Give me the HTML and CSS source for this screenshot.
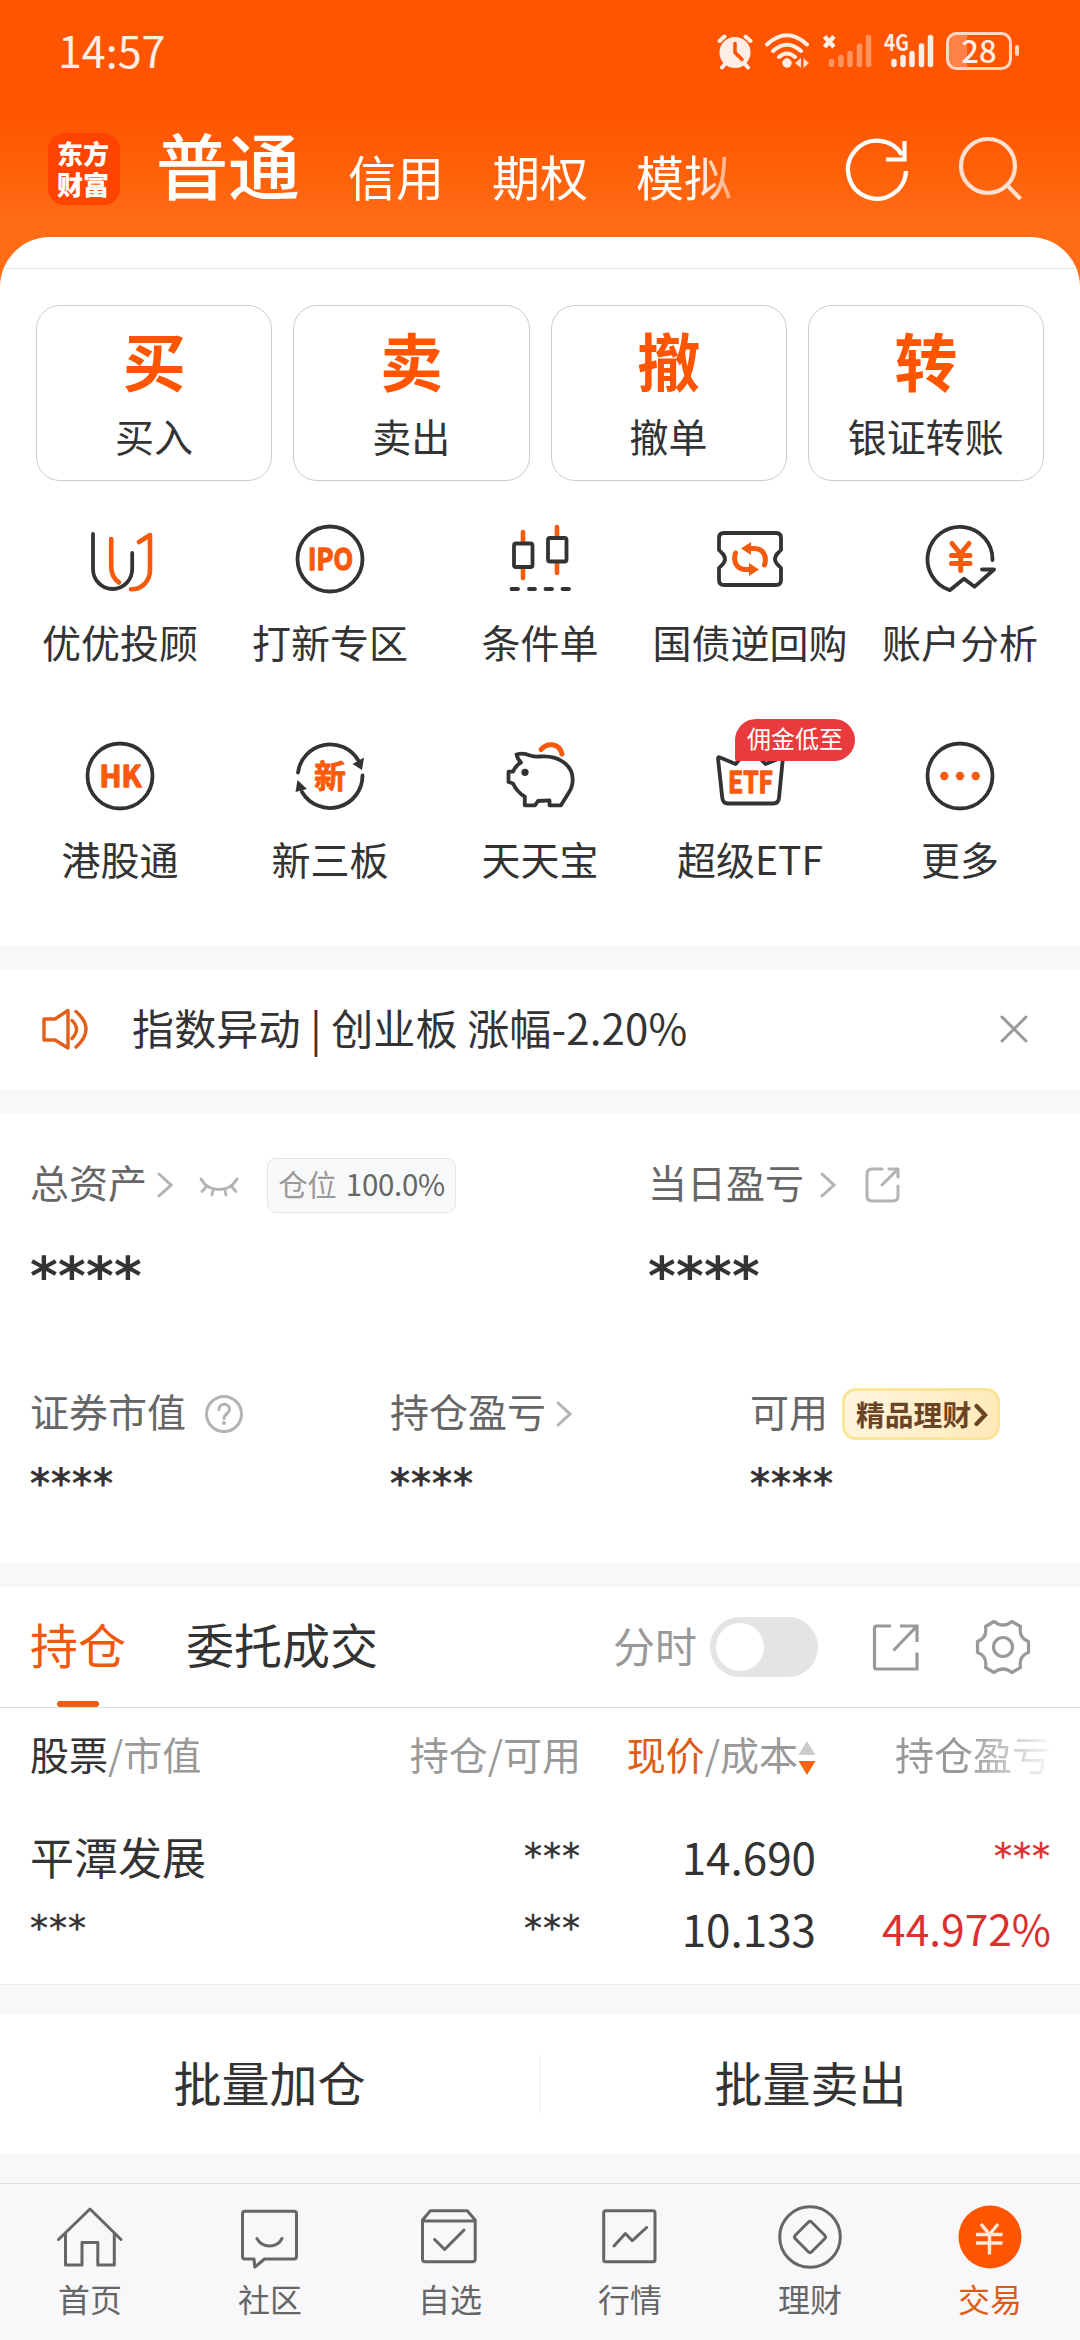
FILE: index.html
```html
<!DOCTYPE html>
<html lang="zh-CN">
<head>
<meta charset="UTF-8">
<meta name="viewport" content="width=1080">
<title>交易</title>
<link rel="stylesheet" href="styles.css">
</head>
<body>
<div class="page">
  <header class="status">
    <span class="clock">14:57</span>
    <div class="status-icons">
      <svg width="36" height="38" viewBox="0 0 36 38"><g fill="none" stroke="#ffeee5" stroke-width="4" stroke-linecap="round"><path d="M2.500 9 7.500 4.500M33.500 9 28.500 4.500M8 32 5 35.500M28 32 31 35.500"/></g><circle cx="18" cy="20.500" r="15.500" fill="#ffeee5"/><path d="M18 11.500V20.500L25 27.500" fill="none" stroke="#ff5500" stroke-width="3.600" stroke-linecap="round"/></svg>
      <svg width="45" height="38" viewBox="0 0 45 38"><g fill="none" stroke="#ffeee5" stroke-width="4" stroke-linecap="round"><path d="M2 12.500Q22 -6 42 12.500M8 19Q22 6.500 36 19M14 25Q22 18 30 25"/></g><circle cx="22" cy="31" r="4.700" fill="#ffeee5"/><path d="M36 26V36L30 31zM38.500 26V36L44 31z" fill="#ffeee5" opacity=".9"/></svg>
      <svg width="50" height="38" viewBox="0 0 50 38"><path d="M2.500 4.500 12 15M12 4.500 2.500 15" stroke="#ffeee5" stroke-width="4.500"/><g stroke="#ff9460" stroke-width="5.500" stroke-linecap="round"><path d="M9.500 29.500V32.500M19 25.500V32.500M28 21.500V32.500M37.500 14V32.500M46.500 5.500V32.500"/></g></svg>
      <svg class="open" width="50" height="38" viewBox="0 0 50 38"><text x="0" y="18.500" class="net" textLength="25" lengthAdjust="spacingAndGlyphs">4G</text><g stroke="#ffeee5" stroke-width="5.500" stroke-linecap="round"><path d="M10 29.500V32.500M19 25.500V32.500M28 21.500V32.500M37.500 14V32.500M46.500 5.500V32.500"/></g></svg>
      <svg class="open" width="73" height="38" viewBox="0 0 73 38"><path d="M3 11Q3 3 11 3H21V35H11Q3 35 3 27z" fill="#ff8148"/><rect x="1.500" y="1.500" width="63" height="35" rx="9" fill="none" stroke="#ffd9c6" stroke-width="3"/><rect x="69" y="13" width="4" height="11" rx="2" fill="#ffd9c6"/><text x="33" y="30.500" class="level" text-anchor="middle">28</text></svg>
    </div>
  </header>

  <nav class="topbar">
    <div class="logo"><span>东方</span><span>财富</span></div>
    <div class="modes"><span class="mode-on">普通</span><span>信用</span><span>期权</span><span>模拟</span></div>
    <div class="tools">
      <svg width="72" height="72" viewBox="0 0 72 72" fill="none" stroke="#fff" stroke-width="4.200"><path d="M65 37A29 29 0 1 1 61 21"/><path d="M63.500 7V25.500H45"/></svg>
      <svg width="72" height="72" viewBox="0 0 72 72" fill="none" stroke="#ffdfcd" stroke-width="4.200"><circle cx="33" cy="32" r="27"/><path d="M52 51 65.500 65"/></svg>
    </div>
  </nav>

  <main>
    <section class="sheet">
      <div class="sheet-head"></div>
      <div class="cards">
        <div class="card"><b>买</b><span>买入</span></div>
        <div class="card"><b>卖</b><span>卖出</span></div>
        <div class="card"><b>撤</b><span>撤单</span></div>
        <div class="card"><b>转</b><span>银证转账</span></div>
      </div>
      <div class="grid">
        <div class="cell"><svg class="ic" viewBox="0 0 72 72"><path d="M9 11V46A19.600 20 0 0 0 48.200 46V30"/><path class="o" d="M27.200 16V43C27.200 51 30 56 35 59.500M47 66.300C58 66.300 66 58 66 47V12L55 19"/></svg><span>优优投顾</span></div>
        <div class="cell"><svg class="ic" viewBox="0 0 72 72"><circle cx="36" cy="36" r="32.500"/><text x="14" y="46.800" textLength="45" lengthAdjust="spacingAndGlyphs">IPO</text></svg><span>打新专区</span></div>
        <div class="cell"><svg class="ic" viewBox="0 0 72 72"><path class="o" d="M19 9V19M19 45V55M53 4V14M53 40V50"/><rect x="10" y="20.500" width="18.500" height="23.500" rx="2"/><rect x="44" y="15" width="18.500" height="23.500" rx="2"/><path d="M7.500 66H14M25 66H31M41.500 66H48M58.500 66H65"/></svg><span>条件单</span></div>
        <div class="cell"><svg class="ic" viewBox="0 0 72 72"><path d="M10 10H62Q67 10 67 15V27L65 29Q57 36 65 43L67 45V57Q67 62 62 62H10Q5 62 5 57V45L7 43Q15 36 7 29L5 27V15Q5 10 10 10z"/><path class="o w5" d="M35 25.500H40C50 25.500 53 34 50.500 42M21.500 30C19 38 22 46.500 32 46.500H37"/><path class="of" d="M27 25.500 37 19V32zM45 46.500 35 40V53z"/></svg><span>国债逆回购</span></div>
        <div class="cell"><svg class="ic" viewBox="0 0 72 72"><path d="M68.500 37A32.500 32.500 0 1 0 25.800 67.200L40 55.700 50.600 63.700 70 46.500H58"/><path class="o w5" d="M28 20.500 36.500 31 45 20.500M27.500 32.500H46M27.500 40.500H46M36.700 31V47.500"/></svg><span>账户分析</span></div>
        <div class="cell"><svg class="ic" viewBox="0 0 72 72"><circle cx="36" cy="36" r="32.500"/><text x="15.500" y="46.800" textLength="42" lengthAdjust="spacingAndGlyphs">HK</text></svg><span>港股通</span></div>
        <div class="cell"><svg class="ic" viewBox="0 0 72 72"><path d="M4 32.500A32.500 32.500 0 0 1 64 20M68.500 35.500A32.500 32.500 0 0 1 8 52"/><path class="df" d="M58.500 24 70 17.500 68 30zM1.500 52 3.500 40 13 49z"/><text class="xin" x="36" y="47.500" text-anchor="middle">新</text></svg><span>新三板</span></div>
        <div class="cell"><svg class="ic" viewBox="0 0 72 72"><path d="M12.500 14.500Q19 12.500 26 15.500Q31 17 36 16.500C56 15 69 26 68.700 40Q68.500 47 65 52.300L57 65.300H45.500V60.300L34 61 31 65.300H20.800V56.700Q13 52 9 43.500L4.500 42V31.700H9Q12 25 17 22.500Q14 20 12.500 14.500z"/><circle class="df" cx="21" cy="32.300" r="3.600"/><path class="o w5" d="M37 9.500C43 2.500 55 2.500 58 14"/></svg><span>天天宝</span></div>
        <div class="cell"><svg class="ic" viewBox="0 0 72 72"><path d="M4 18.500Q4 16.500 6 17.500L21.600 24 36 8 51.500 24 69 17 65 58Q64.500 63.500 59 63.500H14Q9 63.500 8.300 58z"/><text x="14" y="52.800" textLength="45" lengthAdjust="spacingAndGlyphs">ETF</text></svg><span>超级ETF</span><em class="badge">佣金低至</em></div>
        <div class="cell"><svg class="ic" viewBox="0 0 72 72"><circle cx="36" cy="36" r="32.500"/><g class="of"><circle cx="20.300" cy="36" r="4.200"/><circle cx="36" cy="36" r="4.200"/><circle cx="51.700" cy="36" r="4.200"/></g></svg><span>更多</span></div>
      </div>
    </section>

    <section class="notice">
      <svg width="48" height="44" viewBox="0 0 48 44" fill="none" stroke="#e2601c" stroke-width="3.400" stroke-linejoin="round" stroke-linecap="round"><path d="M3 12H14L27 3.500V41L14 33H3z"/><path d="M31 13.500Q40 22 31 31.500M35 4.500Q55 22 35 40"/></svg>
      <span class="notice-text">指数异动 | 创业板 涨幅-2.20%</span>
      <svg width="28" height="28" viewBox="0 0 28 28" stroke="#999" stroke-width="3" stroke-linecap="round"><path d="M2 2 26 26M26 2 2 26"/></svg>
    </section>

    <section class="assets">
      <div class="totals">
        <div>
          <div class="line tall"><span class="lbl">总资产</span><svg class="chev a" viewBox="0 0 16 26"><path d="M2 2 14 13 2 24"/></svg>
            <svg class="eye" viewBox="0 0 40 20"><path d="M2 2C10 16 30 16 38 2M7 10 3 14.500M14 13.500 13 18M26 13.500 27 18M33 10 37 14.500"/></svg>
            <span class="ratio">仓位 <i>100.0%</i></span></div>
          <div class="stars-lg">****</div>
        </div>
        <div>
          <div class="line tall"><span class="lbl">当日盈亏</span><svg class="chev b" viewBox="0 0 16 26"><path d="M2 2 14 13 2 24"/></svg>
            <svg class="share" viewBox="0 0 36 36"><path d="M17 2H7Q2 2 2 7V29Q2 34 7 34H28Q33 34 33 29V19M24 2H33V10M33 2 17 18"/></svg></div>
          <div class="stars-lg">****</div>
        </div>
      </div>
      <div class="parts">
        <div><div class="line"><span class="lbl">证券市值</span><svg class="help" viewBox="0 0 40 40"><circle cx="20" cy="20" r="17.500"/><path d="M15 15.500C15 8.500 25.500 8.500 25.500 15.500C25.500 20 20 19.500 20 24.500"/><circle class="dot" cx="20" cy="29" r="2"/></svg></div><div class="stars-md">****</div></div>
        <div><div class="line"><span class="lbl">持仓盈亏</span><svg class="chev c" viewBox="0 0 16 26"><path d="M2 2 14 13 2 24"/></svg></div><div class="stars-md">****</div></div>
        <div><div class="line"><span class="lbl">可用</span><span class="gold">精品理财<svg viewBox="0 0 14 24"><path d="M2.500 3 11 12 2.500 21"/></svg></span></div><div class="stars-md">****</div></div>
      </div>
    </section>

    <section class="holdings">
      <div class="tabs">
        <span class="tab on">持仓</span><span class="tab">委托成交</span>
        <div class="tab-tools">
          <span class="fs">分时</span><span class="switch"></span>
          <svg width="48" height="48" viewBox="0 0 48 48" fill="none" stroke="#999" stroke-width="3.200"><path d="M19 3H4.500Q2.500 3 2.500 5V44Q2.500 46 4.500 46H45V29.500M28 3H45V19M45 3 21.500 27.500"/></svg>
          <svg width="56" height="56" viewBox="0 0 56 56" fill="none" stroke="#999" stroke-width="3.200" stroke-linejoin="round"><path d="M19 2.500Q28 9.500 37 2.500L45.500 7.500Q43.500 19 53.500 22.500V33.500Q43.500 37 45.500 48.500L37 53.500Q28 46.500 19 53.500L10.500 48.500Q12.500 37 2.500 33.500V22.500Q12.500 19 10.500 7.500z"/><circle cx="28" cy="28" r="9.500"/></svg>
        </div>
      </div>
      <div class="row thead">
        <span><i>股票</i>/市值</span><span>持仓/可用</span>
        <span class="sorted"><i>现价</i>/成本<svg viewBox="0 0 18 36"><path d="M9 1 17.500 15H.5z" fill="#ccc"/><path d="M9 35 17.500 21H.5z" fill="#f7630c"/></svg></span>
        <span class="fade">持仓盈亏</span>
      </div>
      <div class="row body1"><span class="name">平潭发展</span><span class="st">***</span><span>14.690</span><span class="st red">***</span></div>
      <div class="row body2"><span class="st">***</span><span class="st">***</span><span>10.133</span><span class="red pct">44.972%</span></div>
    </section>

    <section class="batch"><div>批量加仓</div><i></i><div>批量卖出</div></section>
  </main>

  <footer class="nav">
    <div><svg class="ni" viewBox="0 0 72 72"><path d="M4.500 38.500 36 8 67 38.500M11.500 32V64H28V41.500H43.800V64H60.300V32"/></svg><span>首页</span></div>
    <div><svg class="ni" viewBox="0 0 72 72"><path d="M11 10.300H60Q62.500 10.300 62.500 13V55.500Q62.500 58 60 58H30.500L20.800 66 20 58H11Q8.500 58 8.500 55.500V13Q8.500 10.300 11 10.300zM22.900 37.500Q27 45 35.600 45T48 37.500"/></svg><span>社区</span></div>
    <div><svg class="ni" viewBox="0 0 72 72"><path d="M8.500 19 16.400 9.700H53.300L61.200 19V58Q61.200 60.700 58.500 60.700H11.200Q8.500 60.700 8.500 58zM8.500 20H61.200M20.600 38.500 30.600 48.500 50 29"/></svg><span>自选</span></div>
    <div><svg class="ni" viewBox="0 0 72 72"><rect x="9.700" y="9.700" width="51.300" height="51" rx="2"/><path d="M20 45 31.400 32.500 38.300 39.700 52.700 26.500"/></svg><span>行情</span></div>
    <div><svg class="ni" viewBox="0 0 72 72"><circle cx="36" cy="36" r="30.300"/><path d="M34.300 21.300Q36 19.600 37.700 21.300L50.700 34.300Q52.400 36 50.700 37.700L37.700 50.700Q36 52.400 34.300 50.700L21.300 37.700Q19.600 36 21.300 34.300z"/></svg><span>理财</span></div>
    <div class="active"><svg class="ni" viewBox="0 0 72 72"><circle class="disc" cx="36" cy="36" r="31.500"/><path class="yen" d="M27 23 35.500 33.500 44 23M22 33.500H48.500M22 42H48.500M35.500 33.500V53.500"/></svg><span>交易</span></div>
  </footer>
</div>
</body>
</html>
```
FILE: styles.css
```css
* { box-sizing: border-box; margin: 0; padding: 0; }
body { font-family: "Noto Sans CJK SC", sans-serif; color: #333; background: #f7f8fa; }
i, em { font-style: normal; }
svg { display: block; flex: none; }
.open { overflow: visible; }
.page {
  width: 1080px; height: 2340px; overflow: hidden;
  display: flex; flex-direction: column;
  background: linear-gradient(#ff5500 0, #ff5500 115px, #ff6c14 225px, #ff6c14 300px) top / 100% 300px no-repeat #f7f8fa;
}

/* status bar */
.status { height: 104px; padding: 0 61px 4px 58px; display: flex; justify-content: space-between; align-items: center; }
.clock { font-size: 43px; line-height: 48px; color: #ffeee5; padding-bottom: 2px; }
.status-icons { display: flex; gap: 12px; align-items: center; padding-top: 2px; }
.net { font-size: 22px; font-weight: 700; fill: #ffeee5; }
.level { font-size: 31px; font-weight: 500; fill: #ffeee5; }

/* top bar */
.topbar { height: 133px; padding: 0 53px 0 48px; display: flex; align-items: flex-start; }
.logo {
  width: 72px; height: 72px; margin-top: 29px; padding: 0 2px 2px 0; border-radius: 16px; background: #ff4400;
  display: flex; flex-direction: column; align-items: center; justify-content: center; gap: 4px;
  color: #fff; font-size: 26px; font-weight: 900; line-height: 27px;
}
.modes {
  margin: 23px 0 0 36px; display: flex; gap: 48px; align-items: flex-end; color: #fff;
  font-size: 48px; line-height: 48px; white-space: nowrap; padding-bottom: 8px;
  -webkit-mask-image: linear-gradient(90deg, #000 540px, rgba(0,0,0,.4) 578px);
  mask-image: linear-gradient(90deg, #000 540px, rgba(0,0,0,.4) 578px);
}
.mode-on { font-size: 72px; line-height: 72px; font-weight: 500; }
.tools { margin: 30px 0 0 auto; display: flex; gap: 42px; }

/* shortcuts */
.sheet { height: 708px; background: #fff; border-radius: 50px 50px 0 0; overflow: hidden; }
.sheet-head { height: 32px; border-bottom: 1px solid #e5e5e5; }
.cards { margin: 36px 36px 0; display: grid; grid-template-columns: repeat(4, 1fr); gap: 21px; }
.card { height: 176px; border: 1px solid #ccc; border-radius: 24px; padding-top: 23px; display: flex; flex-direction: column; align-items: center; gap: 22px; }
.card b { font-size: 63px; line-height: 60px; font-weight: 700; color: #ff5500; }
.card span { font-size: 39px; line-height: 48px; }
.grid { margin: 42px 15px 0; display: grid; grid-template-columns: repeat(5, 210px); grid-auto-rows: 217px; }
.cell { position: relative; display: flex; flex-direction: column; align-items: center; gap: 22px; font-size: 39px; line-height: 48px; white-space: nowrap; }
.ic { width: 72px; height: 72px; fill: none; stroke: #333; stroke-width: 3.8; stroke-linecap: round; stroke-linejoin: round; }
.ic .o { stroke: #f75a0c; stroke-width: 4.6; }
.ic .w5 { stroke-width: 5; }
.ic .of { fill: #f75a0c; stroke: none; }
.ic .df { fill: #333; stroke: none; }
.ic text { fill: #fb5a0c; stroke: #fb5a0c; stroke-width: 1.4; font-size: 29.500px; font-weight: 700; }
.ic .xin { font-size: 32px; stroke-width: .8; }
.badge {
  position: absolute; left: 90px; top: -21px; width: 120px; height: 42px; border-radius: 21px 21px 21px 2px;
  background: #e93b3d; color: #fff; font-size: 24px; line-height: 37px; text-align: center;
}

/* notice */
.notice { height: 120px; margin-top: 24px; padding: 0 52px 0 41px; background: #fff; display: flex; align-items: center; }
.notice-text { margin-left: 43px; flex: 1; font-size: 42px; line-height: 50px; padding-bottom: 4px; white-space: pre; letter-spacing: .15px; }

/* assets */
.assets { height: 450px; margin-top: 24px; background: #fff; padding: 45px 0 0 30px; }
.totals { height: 230px; display: grid; grid-template-columns: 618px 1fr; }
.parts { display: grid; grid-template-columns: repeat(3, 360px); }
.line { height: 52px; display: flex; align-items: center; }
.tall { height: 54px; }
.lbl { font-size: 39px; line-height: 48px; color: #666; padding-bottom: 8px; }
.chev { width: 16px; height: 26px; fill: none; stroke: #b3b3b3; stroke-width: 3; stroke-linecap: round; }
.a { margin-left: 10px; }
.b { margin-left: 16px; }
.c { margin-left: 10px; }
.eye { width: 40px; height: 20px; margin: 3px 0 0 26px; fill: none; stroke: #b3b3b3; stroke-width: 2.8; stroke-linecap: round; }
.ratio {
  margin-left: 28px; width: 189px; height: 55px; border: 1px solid #e3e3e5; border-radius: 9px; background: #f7f8fa;
  font-size: 29.5px; line-height: 49px; color: #999; text-align: center; white-space: nowrap; letter-spacing: -.3px;
}
.ratio i { color: #666; margin-left: 3px; }
.share { width: 36px; height: 36px; margin-left: 29px; fill: none; stroke: #b3b3b3; stroke-width: 3; stroke-linecap: round; stroke-linejoin: round; }
.help { width: 40px; height: 40px; margin-left: 18px; fill: none; stroke: #b3b3b3; stroke-width: 3; stroke-linecap: round; }
.help .dot { fill: #b3b3b3; stroke: none; }
.stars-lg, .stars-md, .row .st { font-family: "DejaVu Sans", sans-serif; }
.stars-lg { font-size: 53px; line-height: 60px; font-weight: 700; margin-top: 35px; letter-spacing: .3px; }
.stars-md { font-size: 40px; line-height: 48px; margin-top: 20px; letter-spacing: 1px; -webkit-text-stroke: .8px #333; }
.gold {
  margin-left: 14px; width: 158px; height: 52px; display: flex; align-items: center; padding-left: 11px;
  border: 3px solid #fbe596; border-radius: 14px; background: linear-gradient(100deg, #fff6e0, #ffe9b8);
  color: #6b4426; font-size: 28.8px; font-weight: 700; line-height: 40px;
}
.gold svg { width: 14px; height: 24px; margin: 2px 0 0 3px; fill: none; stroke: #6b4426; stroke-width: 4.2; stroke-linecap: round; }

/* holdings */
.holdings { height: 398px; margin-top: 24px; background: #fff; border-bottom: 1px solid #e8e8e8; }
.tabs { height: 121px; padding: 0 49px 0 30px; display: flex; border-bottom: 1px solid #ddd; }
.tab { position: relative; font-size: 48px; line-height: 113px; margin-right: 60px; }
.tab.on { color: #f0590d; }
.tab.on::after { content: ""; position: absolute; left: 27px; bottom: 0; width: 42px; height: 6px; border-radius: 3px; background: #ee5b11; }
.tab-tools { margin-left: auto; display: flex; align-items: center; }
.fs { font-size: 42px; line-height: 48px; color: #999; padding-bottom: 5px; }
.switch { width: 108px; height: 60px; border-radius: 30px; background: #e4e4e6; margin: 0 54px 0 13px; padding: 6px; }
.switch::before { content: ""; display: block; width: 48px; height: 48px; border-radius: 50%; background: #fff; }
.tab-tools svg:last-child { margin-left: 55px; }
.row { display: grid; grid-template-columns: 351px 200px 235px 235px; padding-left: 30px; text-align: right; height: 72px; line-height: 72px; font-size: 44px; white-space: nowrap; }
.row > :first-child { text-align: left; }
.thead { height: 112px; line-height: 91px; font-size: 39px; color: #999; }
.thead i { color: #333; }
.sorted { display: flex; justify-content: flex-end; }
.sorted i { color: #de5d14; }
.sorted svg { width: 18px; height: 36px; margin-top: 32px; }
.fade { -webkit-mask-image: linear-gradient(90deg, #000 150px, rgba(0,0,0,.1) 232px); mask-image: linear-gradient(90deg, #000 150px, rgba(0,0,0,.1) 232px); }
.row .st { font-size: 36px; letter-spacing: 1px; -webkit-text-stroke: .4px currentColor; }
.row .red { color: #dc2f30; }
.row .pct { font-size: 42.5px; }

/* batch actions */
.batch { margin-top: 30px; height: 138px; background: #fff; display: flex; align-items: center; font-size: 48px; line-height: 60px; }
.batch div { flex: 1; text-align: center; padding-bottom: 7px; }
.batch i { width: 2px; height: 60px; background: #f6f6f7; }

/* bottom navigation */
.nav { margin-top: 30px; height: 157px; border-top: 1px solid #dfdfe1; background: #f8f8fa; display: grid; grid-template-columns: repeat(6, 180px); padding-top: 17px; }
.nav div { display: flex; flex-direction: column; align-items: center; gap: 5px; font-size: 32px; line-height: 40px; color: #666; }
.ni { width: 72px; height: 72px; fill: none; stroke: #666; stroke-width: 3; stroke-linecap: round; stroke-linejoin: round; }
.nav .active { color: #dd5c17; }
.disc { fill: #ff5500; stroke: none; }
.yen { stroke: #ffe8d8; stroke-width: 3.4; stroke-linecap: butt; }
```
